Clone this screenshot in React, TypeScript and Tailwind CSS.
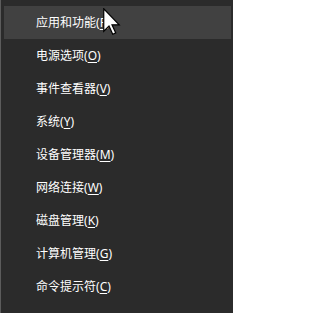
const items: { label: string; key: string }[] = [
  { label: "应用和功能", key: "F" },
  { label: "电源选项", key: "O" },
  { label: "事件查看器", key: "V" },
  { label: "系统", key: "Y" },
  { label: "设备管理器", key: "M" },
  { label: "网络连接", key: "W" },
  { label: "磁盘管理", key: "K" },
  { label: "计算机管理", key: "G" },
  { label: "命令提示符", key: "C" },
];

const Cursor = () => (
  <svg
    className="absolute left-[102px] top-[8px]"
    width="18"
    height="27"
    viewBox="0 0 12 18"
  >
    <path
      d="M0.5 0.5 L0.5 15.5 L4 12 L6.5 17.5 L8.5 16.6 L6 11.2 L10.8 11.2 Z"
      fill="#fff"
      stroke="#000"
      strokeWidth="0.8"
      strokeLinejoin="miter"
    />
  </svg>
);

export default function App() {
  return (
    <div className="relative w-[233px] h-[313px] overflow-hidden bg-[#2b2b2b] border-l border-[#5c5c5c] pt-[6px] pl-[3px] pr-[2px] font-['Noto_Sans','Noto_Sans_CJK_SC',sans-serif]">
      {items.map((item, i) => (
        <div
          key={item.key}
          className={
            i === 0
              ? "h-[33px] flex items-center pl-[32px] text-[12px] text-white bg-[#414141]"
              : "h-[33px] flex items-center pl-[32px] text-[12px] text-white"
          }
        >
          <span>
            {item.label}(<span className="underline underline-offset-2">{item.key}</span>)
          </span>
        </div>
      ))}
      <Cursor />
    </div>
  );
}
